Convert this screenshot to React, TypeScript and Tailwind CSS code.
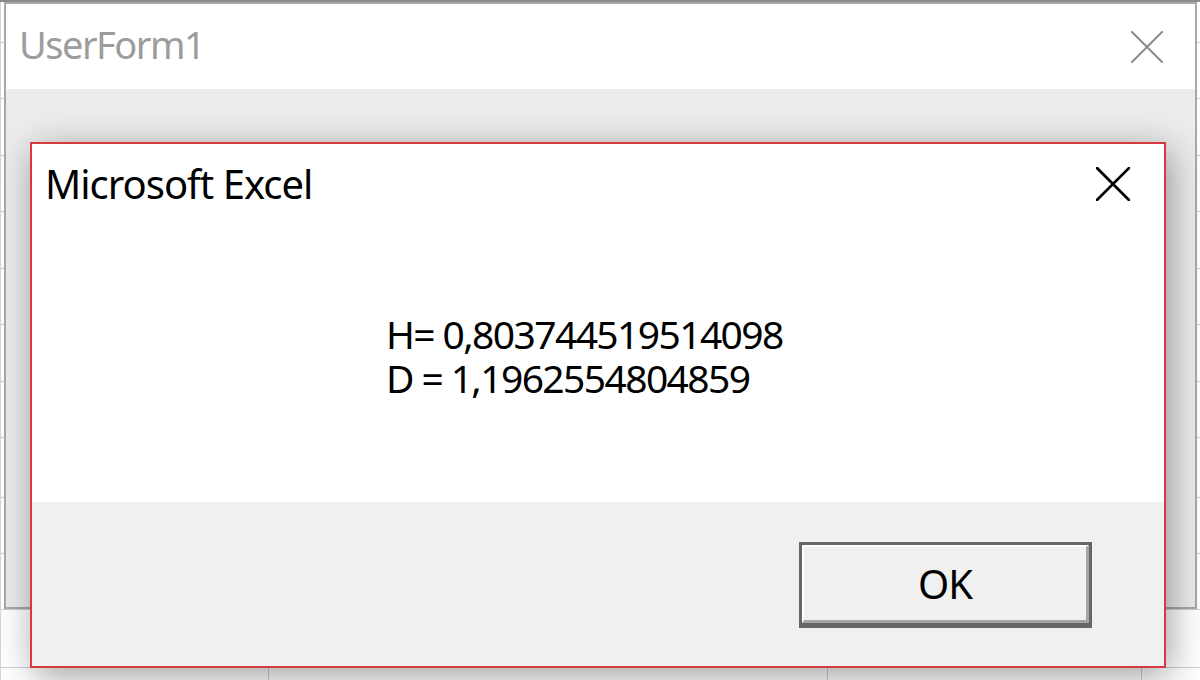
const ROWS = [42, 98, 155, 211, 268, 324, 381, 437, 497, 553, 609, 667];
const COLS = [268, 827, 1141];

function CloseX({ size, color, stroke }: { size: number; color: string; stroke: number }) {
  return (
    <svg width={size} height={size} viewBox="0 0 32 32" fill="none">
      <path d="M1 1 L31 31 M31 1 L1 31" stroke={color} strokeWidth={stroke} strokeLinecap="square" />
    </svg>
  );
}

export default function App() {
  const font = { fontFamily: '"Noto Sans", "Open Sans", sans-serif' };

  return (
    <div className="relative w-[1200px] h-[680px] overflow-hidden bg-white" style={font}>
      {/* excel sheet behind */}
      {ROWS.map((y) => (
        <div key={y} className="absolute left-0 right-0 h-px bg-[#c9ced8]" style={{ top: y }} />
      ))}
      {COLS.map((x) => (
        <div key={x} className="absolute top-0 bottom-0 w-px bg-[#c9ced8]" style={{ left: x }} />
      ))}
      <div className="absolute left-0 top-0 bottom-0 w-px bg-[#d4d4d4]" />
      <div className="absolute left-0 right-0 top-0 h-[2px] bg-[#8a8a8a]" />

      {/* UserForm1 window */}
      <div className="absolute left-[4px] top-[2px] w-[1193px] h-[607px] border-[2.5px] border-[#a8a8a8] bg-[#ececec] flex flex-col">
        <div className="h-[85px] bg-white flex items-center justify-between pl-[13px] pr-[32px] shrink-0">
          <span className="text-[38px] leading-none text-[#9c9c9c] tracking-[-1.5px] -mt-[6px]">UserForm1</span>
          <CloseX size={32} color="#8c8c8c" stroke={2} />
        </div>
        <div className="flex-1 bg-[#ececec]" />
      </div>

      {/* Microsoft Excel message box */}
      <div className="absolute left-[30px] top-[142px] w-[1136px] h-[526px] border-2 border-[#d9383f] bg-[#f0f0f0] flex flex-col shadow-[4px_8px_34px_rgba(0,0,0,0.38)]">
        <div className="h-[358px] bg-white flex flex-col shrink-0">
          <div className="flex items-center justify-between pl-[13px] pr-[34px] pt-[18px]">
            <span className="text-[40px] leading-[44px] text-black tracking-[-1px]">Microsoft Excel</span>
            <CloseX size={34} color="#000000" stroke={2.5} />
          </div>
          <p className="pl-[354px] pt-[106px] text-[39px] leading-[44px] text-black tracking-[-1.6px]">
            H= 0,803744519514098
            <br />
            D = 1,1962554804859
          </p>
        </div>
        <div className="flex-1 flex items-start justify-end pr-[72px] pt-[40px]">
          <button className="w-[293px] h-[86px] border-[3px] border-b-[5px] border-[#666666] bg-[#f0f0f0] p-0">
            <div className="w-full h-full border-t-2 border-l-2 border-white border-r-[3px] border-b-[3px] border-r-[#a5a5a5] border-b-[#a5a5a5] flex items-center justify-center">
              <span className="text-[40px] leading-none text-black tracking-[-1px]">OK</span>
            </div>
          </button>
        </div>
      </div>
    </div>
  );
}
